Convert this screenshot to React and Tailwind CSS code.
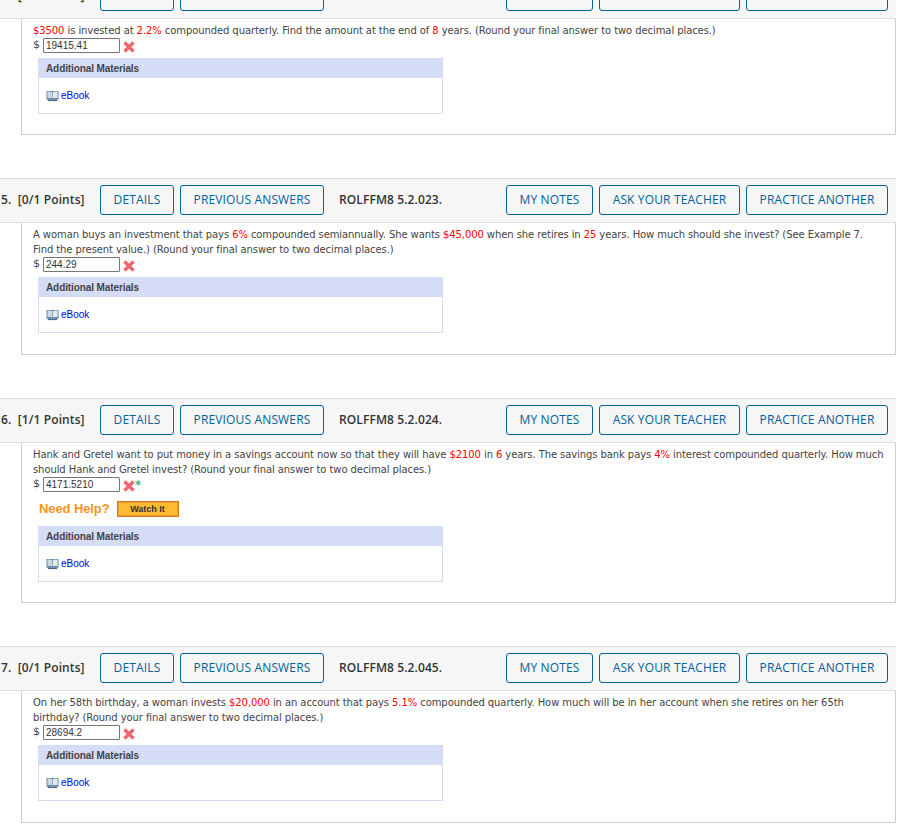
const Red = ({ children }) => <span className="text-[#ff0000]">{children}</span>;

const HeaderButton = ({ children, className = "" }) => (
  <button className={`h-[30px] rounded-[3px] border border-[#00629b] bg-[#f6f6f6] text-[12px] leading-none tracking-[0.15px] text-[#00629b] font-['Open_Sans',sans-serif] ${className}`}>
    {children}
  </button>
);

const BookIcon = () => (
  <svg width="13" height="12" viewBox="0 0 14 12" className="shrink-0">
    <rect x="0.5" y="0.5" width="13" height="9.5" rx="0.5" fill="#5f86a8" />
    <path d="M1.5 1.5 C3.5 1 5.5 1.2 6.7 2 V8.6 C5.5 8 3.5 7.9 1.5 8.4 Z" fill="#c9d9e6" />
    <path d="M12.5 1.5 C10.5 1 8.5 1.2 7.3 2 V8.6 C8.5 8 10.5 7.9 12.5 8.4 Z" fill="#e3ecf3" />
    <rect x="2" y="10" width="10" height="1.5" fill="#4f6a82" />
  </svg>
);

const WrongMark = ({ star }) => (
  <span className="ml-[3px] flex items-center">
    <svg width="12" height="12" viewBox="0 0 12 12" className="mt-[2px]">
      <path d="M1.5 1.5 L10.5 10.5 M10.5 1.5 L1.5 10.5" stroke="#f0656d" strokeWidth="3.2" />
    </svg>
    {star && <span className="h-[12px] text-[12px] leading-[12px] font-bold text-[#5aaa6e]">*</span>}
  </span>
);

const Materials = () => (
  <div className="ml-[5px] w-[405px] border border-t-0 border-[#d5dcf6] bg-white">
    <div className="-mx-px h-[20px] bg-[#d5dcf6] pl-[8px] text-[10px] leading-[21px] font-bold tracking-[-0.1px] text-[#444] font-['Liberation_Sans',sans-serif]">
      Additional Materials
    </div>
    <div className="flex h-[35px] items-center pl-[7px]">
      <BookIcon />
      <a className="ml-[2px] text-[10px] text-[#0000ee] font-['Liberation_Sans',sans-serif]">eBook</a>
    </div>
  </div>
);

const Header = ({ label, code }) => (
  <div className="flex h-[45px] w-[896px] items-center border-y border-[#dedede] bg-[#f6f6f6] pr-[8px] pb-[1px] pl-[1px] font-['Open_Sans',sans-serif] text-[12px] tracking-[0.1px] text-[#333]">
    <span className="w-[99px] font-semibold whitespace-pre">{label}</span>
    <HeaderButton className="w-[74px]">DETAILS</HeaderButton>
    <HeaderButton className="ml-[6px] w-[144px]">PREVIOUS ANSWERS</HeaderButton>
    <span className="ml-[15px] font-semibold">{code}</span>
    <div className="ml-auto flex gap-[6px]">
      <HeaderButton className="w-[87px]">MY NOTES</HeaderButton>
      <HeaderButton className="w-[141px]">ASK YOUR TEACHER</HeaderButton>
      <HeaderButton className="w-[142px]">PRACTICE ANOTHER</HeaderButton>
    </div>
  </div>
);

const Answer = ({ value, star }) => (
  <div className="flex h-[15px] items-center text-[11px]">
    <span className="w-[10px]">$</span>
    <div className="h-[15px] w-[77px] rounded-[1px] border border-[#767676] pl-[2px] text-[10px] leading-[13px] text-[#333] font-['Liberation_Sans',sans-serif]">
      {value}
    </div>
    <WrongMark star={star} />
  </div>
);

const Body = ({ children, value, star, help, height }) => (
  <div className={`ml-[21px] w-[875px] border-x border-b border-[#cccccc] bg-white ${height}`}>
    <div className="pt-[4px] pr-[10px] pl-[11px] font-['DejaVu_Sans',Verdana,sans-serif] text-[#444]">
      <div className="text-[10px] leading-[15px] tracking-[-0.085px]">{children}</div>
      <Answer value={value} star={star} />
      {help && (
        <div className="mt-[9px] ml-[6px] flex h-[16px] items-center font-['Liberation_Sans',sans-serif]">
          <span className="text-[13px] font-bold tracking-[-0.1px] text-[#f7941d]">Need Help?</span>
          <span className="ml-[7px] h-[16px] w-[62px] border border-[#d67a1e] bg-[#fdbb34] text-center text-[9px] leading-[14px] font-bold text-[#333] shadow-[inset_0_0_0_1px_#f09a28]">
            Watch It
          </span>
        </div>
      )}
      <div className={help ? "mt-[9px]" : "mt-[5px]"}>
        <Materials />
      </div>
    </div>
  </div>
);

export default function App() {
  return (
    <div className="h-[834px] w-[905px] overflow-hidden bg-white">
      <div className="-mt-[26px]">
        <Header label="4.  [0/1 Points]" code="" />
      </div>
      <Body value="19415.41" height="h-[116px]">
        <Red>$3500</Red> is invested at <Red>2.2%</Red> compounded quarterly. Find the amount at the end of <Red>8</Red> years. (Round your final answer to two decimal places.)
      </Body>
      <div className="mt-[43px]">
        <Header label="5.  [0/1 Points]" code="ROLFFM8 5.2.023." />
      </div>
      <Body value="244.29" height="h-[132px]">
        A woman buys an investment that pays <Red>6%</Red> compounded semiannually. She wants <Red>$45,000</Red> when she retires in <Red>25</Red> years. How much should she invest? (See Example 7. Find the present value.) (Round your final answer to two decimal places.)
      </Body>
      <div className="mt-[43px]">
        <Header label="6.  [1/1 Points]" code="ROLFFM8 5.2.024." />
      </div>
      <Body value="4171.5210" star help height="h-[160px]">
        Hank and Gretel want to put money in a savings account now so that they will have <Red>$2100</Red> in <Red>6</Red> years. The savings bank pays <Red>4%</Red> interest compounded quarterly. How much should Hank and Gretel invest? (Round your final answer to two decimal places.)
      </Body>
      <div className="mt-[43px]">
        <Header label="7.  [0/1 Points]" code="ROLFFM8 5.2.045." />
      </div>
      <Body value="28694.2" height="h-[132px]">
        On her 58th birthday, a woman invests <Red>$20,000</Red> in an account that pays <Red>5.1%</Red> compounded quarterly. How much will be in her account when she retires on her 65th birthday? (Round your final answer to two decimal places.)
      </Body>
    </div>
  );
}
